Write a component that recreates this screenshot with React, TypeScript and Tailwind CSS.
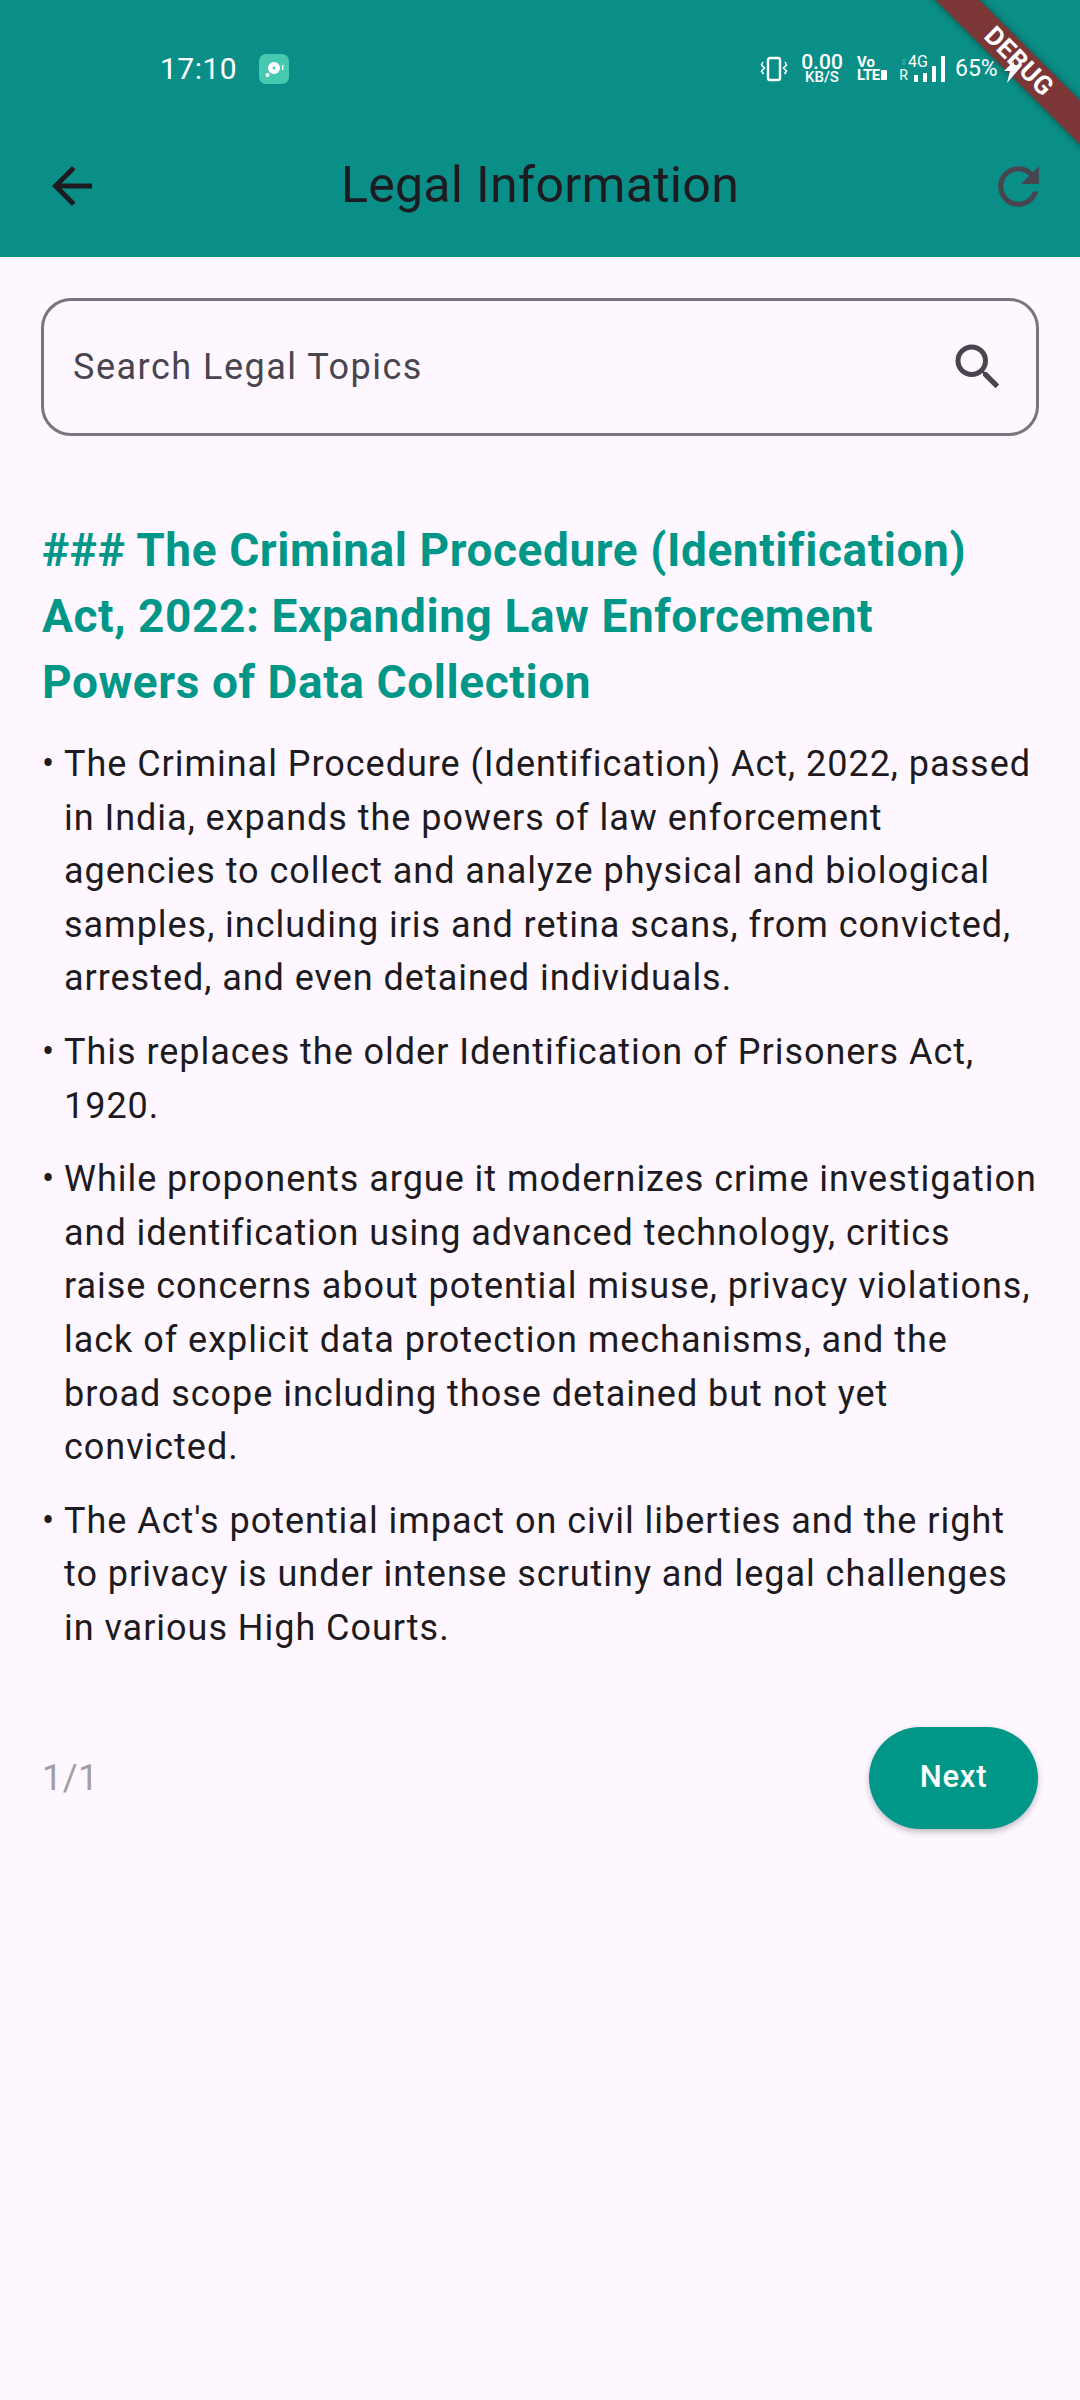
import React from 'react';

const points: { lines: string[] }[] = [
  {
    lines: [
      'The Criminal Procedure (Identification) Act, 2022, passed',
      'in India, expands the powers of law enforcement',
      'agencies to collect and analyze physical and biological',
      'samples, including iris and retina scans, from convicted,',
      'arrested, and even detained individuals.',
    ],
  },
  { lines: ['This replaces the older Identification of Prisoners Act,', '1920.'] },
  {
    lines: [
      'While proponents argue it modernizes crime investigation',
      'and identification using advanced technology, critics',
      'raise concerns about potential misuse, privacy violations,',
      'lack of explicit data protection mechanisms, and the',
      'broad scope including those detained but not yet',
      'convicted.',
    ],
  },
  {
    lines: [
      "The Act's potential impact on civil liberties and the right",
      'to privacy is under intense scrutiny and legal challenges',
      'in various High Courts.',
    ],
  },
];

const StatusBar = () => (
  <div className="flex h-[91px] items-center pl-[160px] pt-[46px] text-white">
    <span className="text-[30px] leading-none tracking-[0.5px]">17:10</span>
    <div className="ml-[22px] flex h-[30px] w-[30px] items-center justify-center rounded-[7px] bg-[#45c9b0]">
      <svg width="22" height="22" viewBox="0 0 22 22">
        <circle cx="11" cy="10" r="6" fill="#fff" />
        <circle cx="11" cy="10" r="1.5" fill="#45c9b0" />
        <circle cx="4.5" cy="17" r="2" fill="#fff" />
        <rect x="19" y="7" width="1.4" height="5" fill="#fff" />
      </svg>
    </div>
    <div className="ml-auto flex items-center pr-[81px]">
      <svg width="28" height="26" viewBox="0 0 28 26" fill="none" stroke="#fff" strokeWidth="2">
        <rect x="8" y="2" width="12" height="22" rx="2" strokeWidth="2.4" />
        <path d="M3 6 l-1.5 3 l3 3 l-3 3 l2 3 M25 6 l1.5 3 l-3 3 l3 3 l-2 3" strokeWidth="1.6" />
      </svg>
      <div className="ml-[12px] flex w-[44px] flex-col items-center font-medium leading-none">
        <span className="text-[21px] leading-[17px]">0.00</span>
        <span className="text-[15px] leading-[13px]">KB/S</span>
      </div>
      <div className="ml-[13px] flex w-[30px] flex-col text-[15px] font-bold leading-[13px]">
        <span>Vo</span>
        <span className="flex items-center gap-[1px] tracking-[-0.5px]">
          LTE
          <span className="h-[10px] w-[7px] rounded-[1px] bg-white" />
        </span>
      </div>
      <div className="ml-[12px] flex w-[9px] flex-col items-center">
        <span className="text-[9px] leading-[13px] text-[#4fb3ac]">⇕</span>
        <span className="text-[14px] leading-[13px]">R</span>
      </div>
      <div className="relative h-[27px] w-[38px]">
        <span className="absolute left-0 top-0 text-[16px] leading-[14px]">4G</span>
        <div className="absolute bottom-0 left-[6px] flex items-end gap-[5px]">
          <span className="h-[7px] w-[4px] bg-white" />
          <span className="h-[9px] w-[4px] bg-white" />
          <span className="h-[16px] w-[4px] bg-white" />
          <span className="h-[26px] w-[4px] bg-white" />
        </div>
      </div>
      <span className="ml-[9px] w-[44px] whitespace-nowrap text-[23px] leading-none">65%</span>
    </div>
  </div>
);

const Toolbar = () => (
  <div className="flex h-[166px] items-start pl-[42px] pr-[31px] pt-[65px]">
    <svg width="60" height="60" viewBox="0 0 24 24">
      <path fill="#1d1b20" d="M20 11H7.83l5.59-5.59L12 4l-8 8 8 8 1.41-1.41L7.83 13H20v-2z" />
    </svg>
    <span className="mt-[1px] flex-1 pr-[10px] text-center text-[50px] leading-[56px] tracking-[0.3px] text-[#1d1b20]">
      Legal Information
    </span>
    <svg width="61" height="61" viewBox="0 0 24 24">
      <path
        fill="#49454f"
        d="M17.65 6.35A7.958 7.958 0 0 0 12 4c-4.42 0-7.99 3.58-7.99 8s3.57 8 7.99 8c3.73 0 6.84-2.55 7.73-6h-2.08A5.99 5.99 0 0 1 12 18c-3.31 0-6-2.69-6-6s2.69-6 6-6c1.66 0 3.14.69 4.22 1.78L13 11h7V4l-2.35 2.35z"
      />
    </svg>
  </div>
);

export default function App() {
  return (
    <div className="relative flex min-h-[2400px] w-[1080px] flex-col overflow-hidden bg-[#fef7ff] font-['Roboto',sans-serif]">
      <div className="bg-[#098f87]">
        <StatusBar />
        <Toolbar />
      </div>

      <div className="flex flex-col px-[42px] pt-[41px]">
        {/* Search */}
        <div className="-mx-[1px] flex h-[138px] items-center justify-between rounded-[30px] border-[3px] border-[#79747e] pl-[29px] pr-[28px]">
          <span className="text-[36px] tracking-[1.5px] text-[#49454f]">Search Legal Topics</span>
          <svg width="60" height="60" viewBox="0 0 24 24">
            <path
              fill="#49454f"
              d="M15.5 14h-.79l-.28-.27A6.471 6.471 0 0 0 16 9.5 6.5 6.5 0 1 0 9.5 16c1.61 0 3.09-.59 4.23-1.57l.27.28v.79l5 4.99L20.49 19l-4.99-5zm-6 0C7.01 14 5 11.99 5 9.5S7.01 5 9.5 5 14 7.01 14 9.5 11.99 14 9.5 14z"
            />
          </svg>
        </div>

        <h1 className="mt-[81px] whitespace-nowrap text-[46px] font-bold leading-[66px] tracking-[0.58px] text-[#009688]">
          <div>### The Criminal Procedure (Identification)</div>
          <div>Act, 2022: Expanding Law Enforcement</div>
          <div>Powers of Data Collection</div>
        </h1>

        <div className="mt-[23px] flex flex-col gap-[20px] text-[36px] leading-[53.6px] tracking-[0.97px] text-[#1d1b20]">
          {points.map((p, i) => (
            <div key={i} className="flex">
              <span className="w-[22px] shrink-0">•</span>
              <div className="whitespace-nowrap">
                {p.lines.map((l) => (
                  <div key={l}>{l}</div>
                ))}
              </div>
            </div>
          ))}
        </div>

        <div className="mt-[71px] flex items-center justify-between">
          <span className="text-[36px] tracking-[0.5px] text-[#a19ea3]">1/1</span>
          <button className="flex h-[102px] w-[169px] items-center justify-center rounded-full bg-[#009688] text-[31px] font-medium tracking-[0.8px] text-white shadow-[0_3px_6px_rgba(0,0,0,0.25)]">
            Next
          </button>
        </div>
      </div>

      {/* debug banner */}
      <div className="absolute left-[869px] top-[46px] flex h-[31px] w-[300px] rotate-45 items-center justify-center bg-[#7c3636] text-[26px] font-bold tracking-[0.5px] text-white shadow-[0_0_8px_rgba(0,0,0,0.4)]">
        DEBUG
      </div>
      {/* charging bolt sits over the banner */}
      <svg className="absolute left-[1004px] top-[61px]" width="16" height="22" viewBox="0 0 16 22">
        <path d="M10 0 L0 10 H6 L3 22 L16 7 H9 Z" fill="#fff" />
      </svg>
    </div>
  );
}
